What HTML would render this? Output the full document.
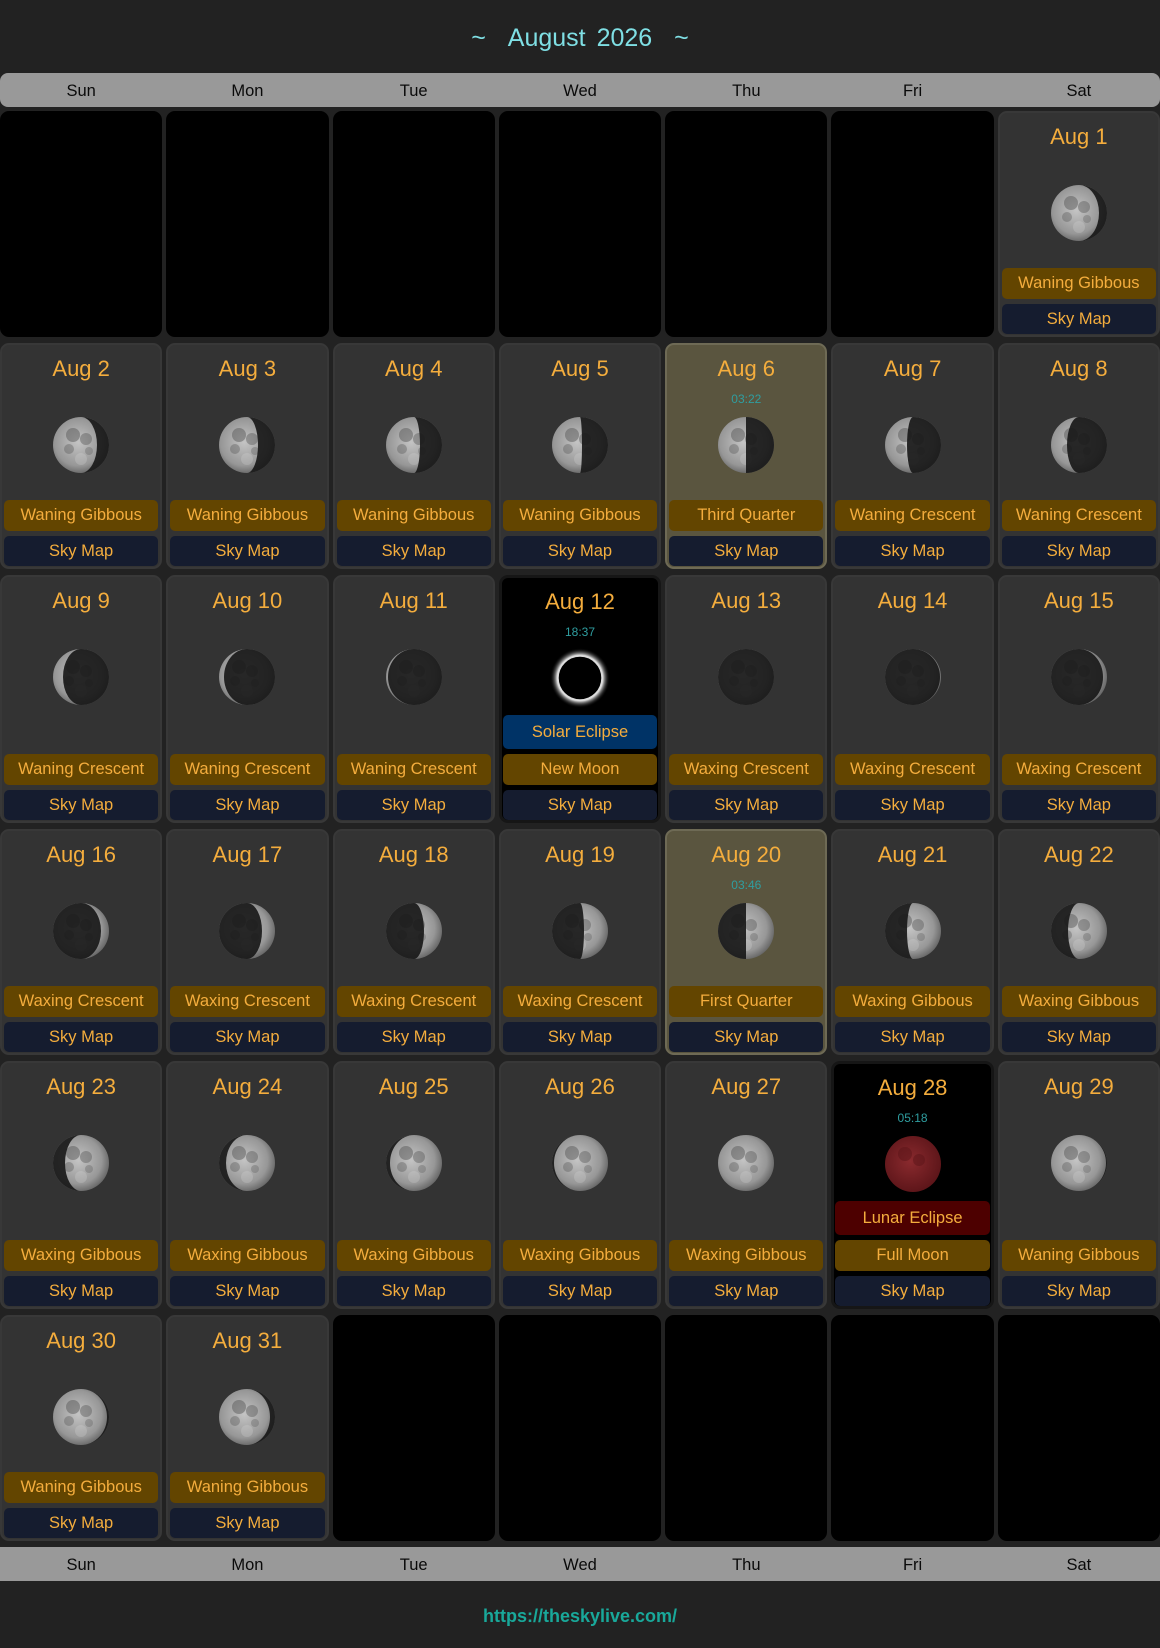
<!DOCTYPE html>
<html><head><meta charset="utf-8">
<style>
*{box-sizing:border-box;margin:0;padding:0}
body{width:1160px;height:1648px;background:#222;font-family:"Liberation Sans",sans-serif;position:relative;overflow:hidden}
.title{position:absolute;top:18px;left:0;width:1160px;text-align:center;color:#7fdfe4;font-size:25px;line-height:40px;word-spacing:4px}
.hdr{position:absolute;left:0;width:1160px;height:34px;background:#999;border-radius:8px;display:grid;grid-template-columns:repeat(7,1fr);gap:4px}
.hdr div{text-align:center;line-height:36px;font-size:16.5px;color:#0a0a0a}
.grid{position:absolute;top:111px;left:0;width:1160px;display:grid;grid-template-columns:repeat(7,1fr);grid-template-rows:226px 226px 248px 226px 248px 226px;gap:6px 4px}
.c{position:relative;background:#333;border:2px solid #383838;border-radius:9px;display:flex;flex-direction:column;justify-content:flex-end;padding:0 2px 1px}
.e{background:#000;border-color:#000}
.q{background:#5a553f;border-color:#6e6a55}
.x{background:#000;border:3px solid #161616;padding:0 1px 0}
.d{position:absolute;top:10px;left:0;right:0;text-align:center;color:#f4ad3d;font-size:22px;line-height:28px}
.t{position:absolute;top:46px;left:0;right:0;text-align:center;color:#2f9ea0;font-size:12px;line-height:16px}
.m{position:absolute;top:72px;left:50%;margin-left:-28px;width:56px;height:56px}
.b{height:31px;line-height:31px;text-align:center;color:#f4ad3d;font-size:16.5px;border-radius:5px;margin-top:5px}
.p{background:#634500}
.s{background:#151c2f;height:30px;line-height:30px}
.se{background:#003366;height:34px;line-height:34px}
.le{background:#4d0000;height:34px;line-height:34px}
.foot{position:absolute;top:1606px;left:0;width:1160px;text-align:center;color:#19a89a;font-size:18px;font-weight:bold}
</style></head><body>
<svg width="0" height="0" style="position:absolute"><defs>
<radialGradient id="lg" cx="45%" cy="45%" r="60%"><stop offset="0" stop-color="#c4c4c4"/><stop offset="0.7" stop-color="#979797"/><stop offset="1" stop-color="#5e5e5e"/></radialGradient>
<radialGradient id="rg" cx="45%" cy="45%" r="60%"><stop offset="0" stop-color="#8a2a2e"/><stop offset="1" stop-color="#5a1418"/></radialGradient>
<radialGradient id="ring" cx="50%" cy="50%" r="50%"><stop offset="0.66" stop-color="#000"/><stop offset="0.74" stop-color="#fff"/><stop offset="0.8" stop-color="#999"/><stop offset="1" stop-color="#000" stop-opacity="0"/></radialGradient>
<g id="mb"><circle cx="28" cy="28" r="28" fill="url(#lg)"/><circle cx="20" cy="18" r="7" fill="#5a5a5a" opacity=".5"/><circle cx="33" cy="22" r="6" fill="#5a5a5a" opacity=".45"/><circle cx="16" cy="32" r="5" fill="#5a5a5a" opacity=".4"/><circle cx="36" cy="34" r="4" fill="#666" opacity=".4"/><circle cx="28" cy="42" r="6" fill="#ddd" opacity=".25"/></g>
</defs></svg>
<div class="title">~&nbsp;&nbsp;August 2026&nbsp;&nbsp;~</div>
<div class="hdr" style="top:73px"><div>Sun</div><div>Mon</div><div>Tue</div><div>Wed</div><div>Thu</div><div>Fri</div><div>Sat</div></div>
<div class="grid">
<div class="c e"></div><div class="c e"></div><div class="c e"></div><div class="c e"></div><div class="c e"></div><div class="c e"></div>
<div class="c"><div class="d">Aug 1</div><svg class="m" viewBox="0 0 56 56"><use href="#mb"/><path d="M28,0A28,28 0 0 1 28,56A20,28 0 0 0 28,0Z" fill="#161616" opacity=".9"/></svg><div class="b p">Waning Gibbous</div><div class="b s">Sky Map</div></div>

<div class="c"><div class="d">Aug 2</div><svg class="m" viewBox="0 0 56 56"><use href="#mb"/><path d="M28,0A28,28 0 0 1 28,56A16,28 0 0 0 28,0Z" fill="#161616" opacity=".9"/></svg><div class="b p">Waning Gibbous</div><div class="b s">Sky Map</div></div>
<div class="c"><div class="d">Aug 3</div><svg class="m" viewBox="0 0 56 56"><use href="#mb"/><path d="M28,0A28,28 0 0 1 28,56A11,28 0 0 0 28,0Z" fill="#161616" opacity=".9"/></svg><div class="b p">Waning Gibbous</div><div class="b s">Sky Map</div></div>
<div class="c"><div class="d">Aug 4</div><svg class="m" viewBox="0 0 56 56"><use href="#mb"/><path d="M28,0A28,28 0 0 1 28,56A6,28 0 0 0 28,0Z" fill="#161616" opacity=".9"/></svg><div class="b p">Waning Gibbous</div><div class="b s">Sky Map</div></div>
<div class="c"><div class="d">Aug 5</div><svg class="m" viewBox="0 0 56 56"><use href="#mb"/><path d="M28,0A28,28 0 0 1 28,56A2,28 0 0 0 28,0Z" fill="#161616" opacity=".9"/></svg><div class="b p">Waning Gibbous</div><div class="b s">Sky Map</div></div>
<div class="c q"><div class="d">Aug 6</div><div class="t">03:22</div><svg class="m" viewBox="0 0 56 56"><use href="#mb"/><path d="M28,0A28,28 0 0 1 28,56Z" fill="#161616" opacity=".9"/></svg><div class="b p">Third Quarter</div><div class="b s">Sky Map</div></div>
<div class="c"><div class="d">Aug 7</div><svg class="m" viewBox="0 0 56 56"><use href="#mb"/><path d="M28,0A28,28 0 0 1 28,56A6,28 0 0 1 28,0Z" fill="#161616" opacity=".9"/></svg><div class="b p">Waning Crescent</div><div class="b s">Sky Map</div></div>
<div class="c"><div class="d">Aug 8</div><svg class="m" viewBox="0 0 56 56"><use href="#mb"/><path d="M28,0A28,28 0 0 1 28,56A12,28 0 0 1 28,0Z" fill="#161616" opacity=".9"/></svg><div class="b p">Waning Crescent</div><div class="b s">Sky Map</div></div>

<div class="c"><div class="d">Aug 9</div><svg class="m" viewBox="0 0 56 56"><use href="#mb"/><path d="M28,0A28,28 0 0 1 28,56A18,28 0 0 1 28,0Z" fill="#161616" opacity=".9"/></svg><div class="b p">Waning Crescent</div><div class="b s">Sky Map</div></div>
<div class="c"><div class="d">Aug 10</div><svg class="m" viewBox="0 0 56 56"><use href="#mb"/><path d="M28,0A28,28 0 0 1 28,56A23,28 0 0 1 28,0Z" fill="#161616" opacity=".9"/></svg><div class="b p">Waning Crescent</div><div class="b s">Sky Map</div></div>
<div class="c"><div class="d">Aug 11</div><svg class="m" viewBox="0 0 56 56"><use href="#mb"/><path d="M28,0A28,28 0 0 1 28,56A26,28 0 0 1 28,0Z" fill="#161616" opacity=".9"/></svg><div class="b p">Waning Crescent</div><div class="b s">Sky Map</div></div>
<div class="c x"><div class="d">Aug 12</div><div class="t">18:37</div><svg class="m" viewBox="0 0 56 56" style="overflow:visible"><circle cx="28" cy="28" r="30" fill="url(#ring)"/><circle cx="28" cy="28" r="22" fill="#000" stroke="#ddd" stroke-width="1.5"/></svg><div class="b se">Solar Eclipse</div><div class="b p">New Moon</div><div class="b s">Sky Map</div></div>
<div class="c"><div class="d">Aug 13</div><svg class="m" viewBox="0 0 56 56"><use href="#mb"/><circle cx="28" cy="28" r="28" fill="#161616" opacity=".9"/></svg><div class="b p">Waxing Crescent</div><div class="b s">Sky Map</div></div>
<div class="c"><div class="d">Aug 14</div><svg class="m" viewBox="0 0 56 56"><use href="#mb"/><path d="M28,0A28,28 0 0 0 28,56A27,28 0 0 0 28,0Z" fill="#161616" opacity=".9"/></svg><div class="b p">Waxing Crescent</div><div class="b s">Sky Map</div></div>
<div class="c"><div class="d">Aug 15</div><svg class="m" viewBox="0 0 56 56"><use href="#mb"/><path d="M28,0A28,28 0 0 0 28,56A24,28 0 0 0 28,0Z" fill="#161616" opacity=".9"/></svg><div class="b p">Waxing Crescent</div><div class="b s">Sky Map</div></div>

<div class="c"><div class="d">Aug 16</div><svg class="m" viewBox="0 0 56 56"><use href="#mb"/><path d="M28,0A28,28 0 0 0 28,56A20,28 0 0 0 28,0Z" fill="#161616" opacity=".9"/></svg><div class="b p">Waxing Crescent</div><div class="b s">Sky Map</div></div>
<div class="c"><div class="d">Aug 17</div><svg class="m" viewBox="0 0 56 56"><use href="#mb"/><path d="M28,0A28,28 0 0 0 28,56A15,28 0 0 0 28,0Z" fill="#161616" opacity=".9"/></svg><div class="b p">Waxing Crescent</div><div class="b s">Sky Map</div></div>
<div class="c"><div class="d">Aug 18</div><svg class="m" viewBox="0 0 56 56"><use href="#mb"/><path d="M28,0A28,28 0 0 0 28,56A10,28 0 0 0 28,0Z" fill="#161616" opacity=".9"/></svg><div class="b p">Waxing Crescent</div><div class="b s">Sky Map</div></div>
<div class="c"><div class="d">Aug 19</div><svg class="m" viewBox="0 0 56 56"><use href="#mb"/><path d="M28,0A28,28 0 0 0 28,56A4,28 0 0 0 28,0Z" fill="#161616" opacity=".9"/></svg><div class="b p">Waxing Crescent</div><div class="b s">Sky Map</div></div>
<div class="c q"><div class="d">Aug 20</div><div class="t">03:46</div><svg class="m" viewBox="0 0 56 56"><use href="#mb"/><path d="M28,0A28,28 0 0 0 28,56Z" fill="#161616" opacity=".9"/></svg><div class="b p">First Quarter</div><div class="b s">Sky Map</div></div>
<div class="c"><div class="d">Aug 21</div><svg class="m" viewBox="0 0 56 56"><use href="#mb"/><path d="M28,0A28,28 0 0 0 28,56A6,28 0 0 1 28,0Z" fill="#161616" opacity=".9"/></svg><div class="b p">Waxing Gibbous</div><div class="b s">Sky Map</div></div>
<div class="c"><div class="d">Aug 22</div><svg class="m" viewBox="0 0 56 56"><use href="#mb"/><path d="M28,0A28,28 0 0 0 28,56A11,28 0 0 1 28,0Z" fill="#161616" opacity=".9"/></svg><div class="b p">Waxing Gibbous</div><div class="b s">Sky Map</div></div>

<div class="c"><div class="d">Aug 23</div><svg class="m" viewBox="0 0 56 56"><use href="#mb"/><path d="M28,0A28,28 0 0 0 28,56A16,28 0 0 1 28,0Z" fill="#161616" opacity=".9"/></svg><div class="b p">Waxing Gibbous</div><div class="b s">Sky Map</div></div>
<div class="c"><div class="d">Aug 24</div><svg class="m" viewBox="0 0 56 56"><use href="#mb"/><path d="M28,0A28,28 0 0 0 28,56A21,28 0 0 1 28,0Z" fill="#161616" opacity=".9"/></svg><div class="b p">Waxing Gibbous</div><div class="b s">Sky Map</div></div>
<div class="c"><div class="d">Aug 25</div><svg class="m" viewBox="0 0 56 56"><use href="#mb"/><path d="M28,0A28,28 0 0 0 28,56A24,28 0 0 1 28,0Z" fill="#161616" opacity=".9"/></svg><div class="b p">Waxing Gibbous</div><div class="b s">Sky Map</div></div>
<div class="c"><div class="d">Aug 26</div><svg class="m" viewBox="0 0 56 56"><use href="#mb"/><path d="M28,0A28,28 0 0 0 28,56A26,28 0 0 1 28,0Z" fill="#161616" opacity=".9"/></svg><div class="b p">Waxing Gibbous</div><div class="b s">Sky Map</div></div>
<div class="c"><div class="d">Aug 27</div><svg class="m" viewBox="0 0 56 56"><use href="#mb"/></svg><div class="b p">Waxing Gibbous</div><div class="b s">Sky Map</div></div>
<div class="c x"><div class="d">Aug 28</div><div class="t">05:18</div><svg class="m" viewBox="0 0 56 56"><circle cx="28" cy="28" r="28" fill="url(#rg)"/><circle cx="20" cy="18" r="7" fill="#5a1418" opacity=".5"/><circle cx="34" cy="24" r="6" fill="#5a1418" opacity=".5"/></svg><div class="b le">Lunar Eclipse</div><div class="b p">Full Moon</div><div class="b s">Sky Map</div></div>
<div class="c"><div class="d">Aug 29</div><svg class="m" viewBox="0 0 56 56"><use href="#mb"/><path d="M28,0A28,28 0 0 1 28,56A27,28 0 0 0 28,0Z" fill="#161616" opacity=".9"/></svg><div class="b p">Waning Gibbous</div><div class="b s">Sky Map</div></div>

<div class="c"><div class="d">Aug 30</div><svg class="m" viewBox="0 0 56 56"><use href="#mb"/><path d="M28,0A28,28 0 0 1 28,56A26,28 0 0 0 28,0Z" fill="#161616" opacity=".9"/></svg><div class="b p">Waning Gibbous</div><div class="b s">Sky Map</div></div>
<div class="c"><div class="d">Aug 31</div><svg class="m" viewBox="0 0 56 56"><use href="#mb"/><path d="M28,0A28,28 0 0 1 28,56A23,28 0 0 0 28,0Z" fill="#161616" opacity=".9"/></svg><div class="b p">Waning Gibbous</div><div class="b s">Sky Map</div></div>
<div class="c e"></div><div class="c e"></div><div class="c e"></div><div class="c e"></div><div class="c e"></div>
</div>
<div class="hdr" style="top:1547px;border-radius:0"><div>Sun</div><div>Mon</div><div>Tue</div><div>Wed</div><div>Thu</div><div>Fri</div><div>Sat</div></div>
<div class="foot">https://theskylive.com/</div>
</body></html>
